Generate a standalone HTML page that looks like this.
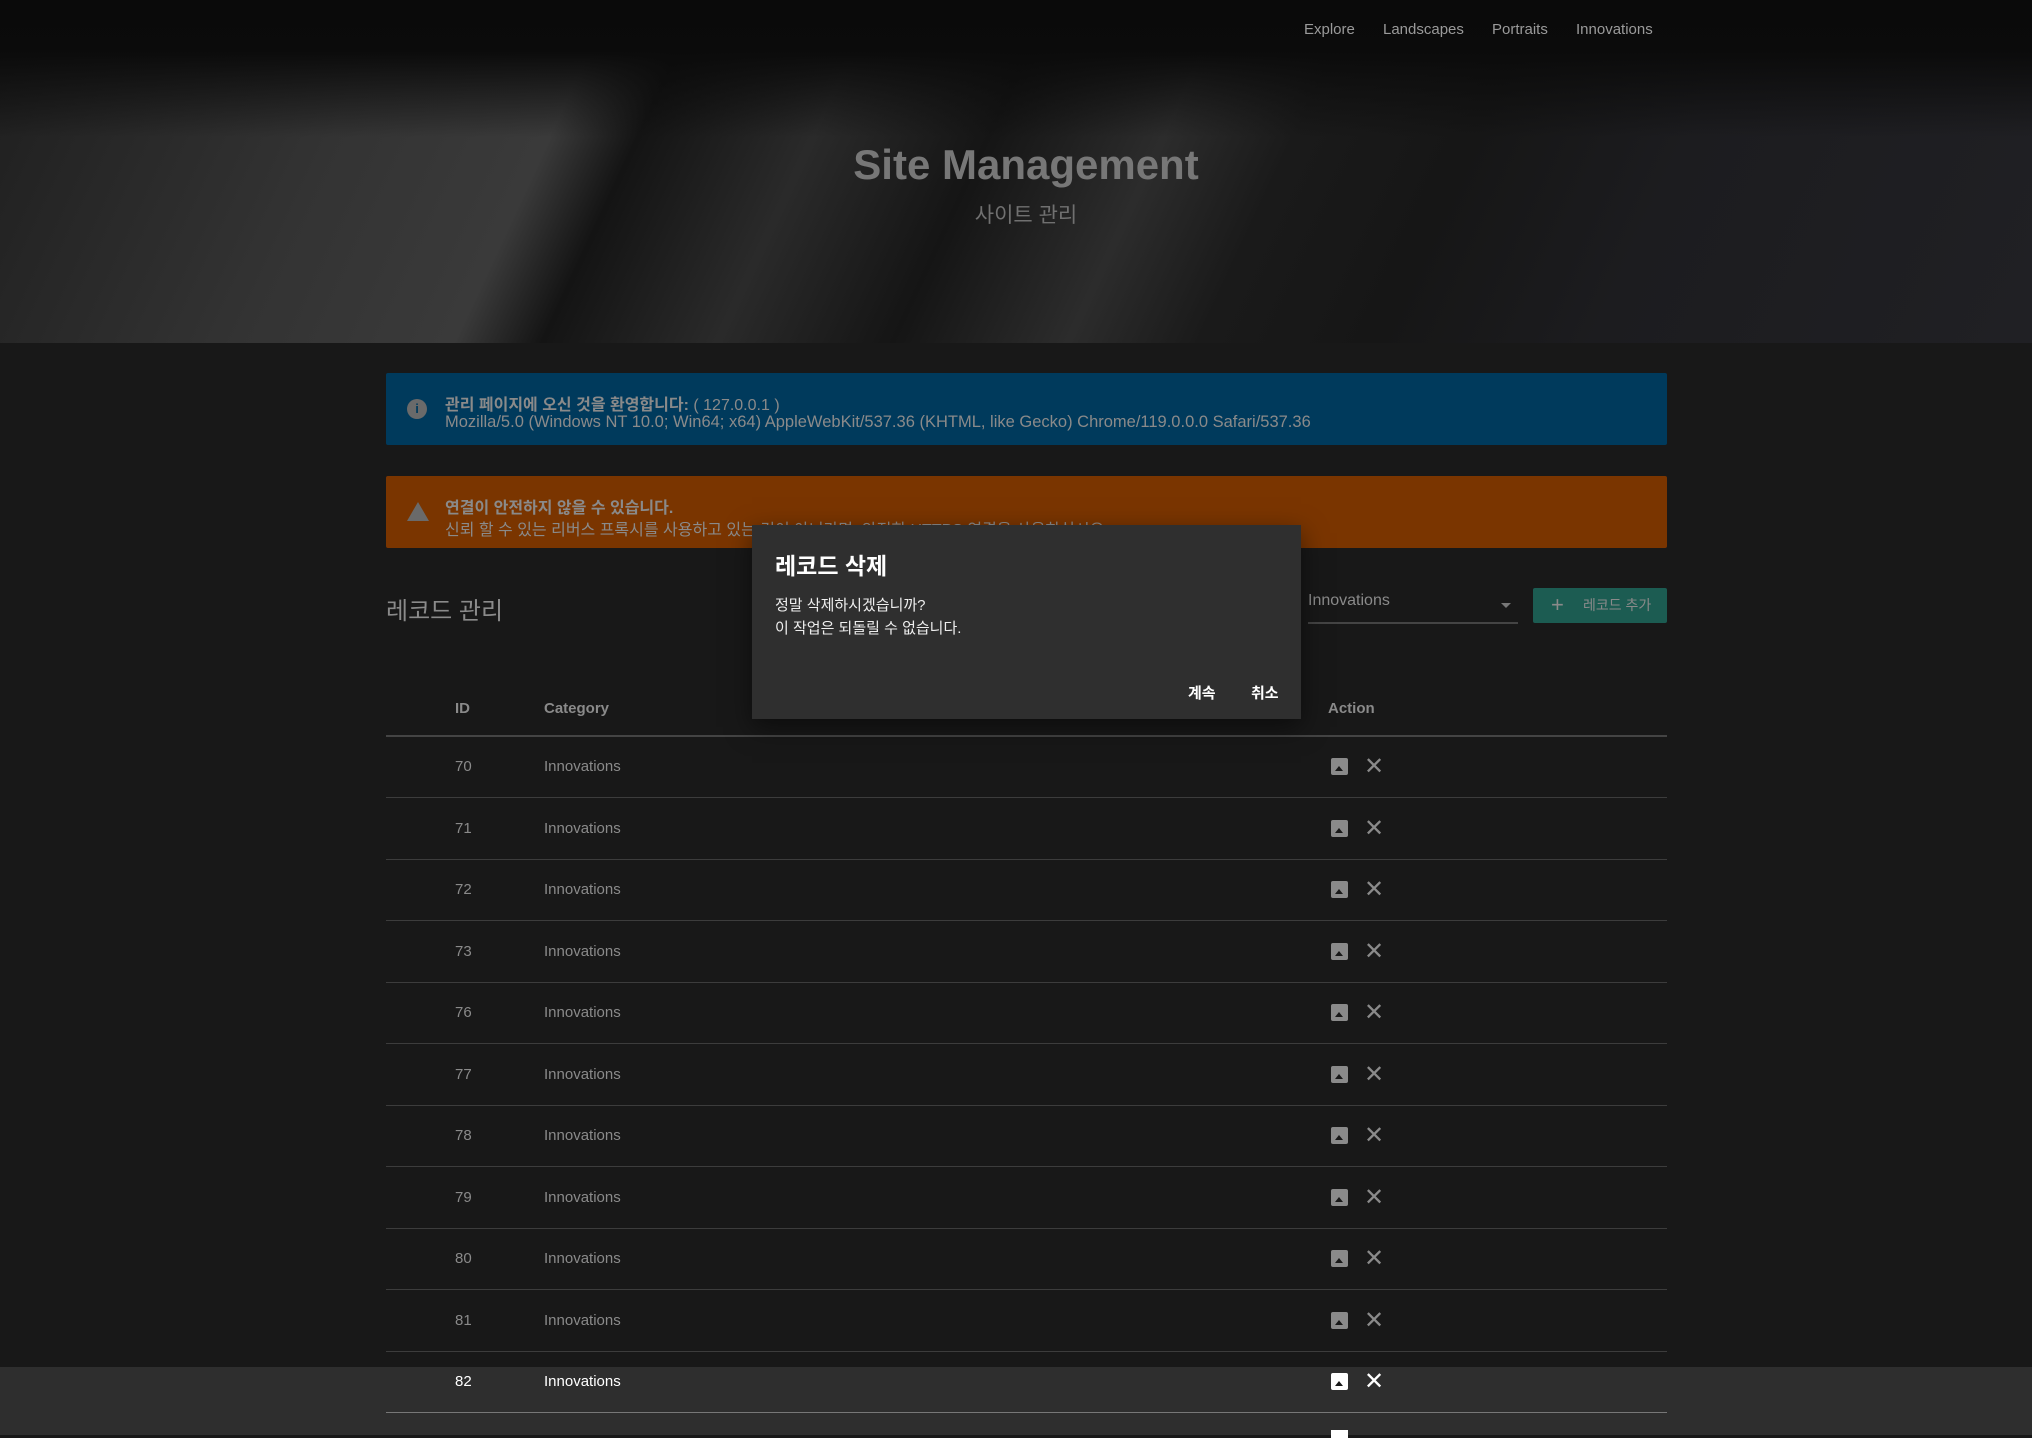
<!DOCTYPE html>
<html><head><meta charset="utf-8"><style>
*{margin:0;padding:0;box-sizing:border-box}
body{width:2032px;height:1435px;overflow:hidden;background:#181818;font-family:"Liberation Sans","Noto Sans CJK KR",sans-serif;position:relative;color:#8a8a8a}
.a{position:absolute;white-space:nowrap}
#hero{position:absolute;left:0;top:0;width:2032px;height:343px;overflow:hidden;
background:linear-gradient(180deg,#0a0a0a 0%,#0b0b0b 15%,rgba(10,10,10,0) 40%),
linear-gradient(115deg,#1e1e1e 0%,#333 18%,#3a3a3a 28%,#141414 32%,#2a2a2a 40%,#151515 48%,#2c2c2c 56%,#1a1a1a 62%,#161616 70%,#1c1c1f 80%,#202024 100%)}
.nav{top:21px;font-size:15px;color:#9a9a9a}
.row{position:absolute;left:386px;width:1281px;height:62px;border-bottom:1.5px solid #3c3c3c}
.row span{position:absolute;top:22px;font-size:15px;color:#8a8a8a}
.img{position:absolute;left:945px;top:22px;width:17px;height:17px;background:#8a8a8a;border-radius:2px}
.img:after{content:"";position:absolute;left:4px;bottom:4px;border-left:4px solid transparent;border-right:4px solid transparent;border-bottom:5px solid #181818}
.x{position:absolute;left:978px;top:16px;font-size:24px;color:#8a8a8a;font-family:"DejaVu Sans",sans-serif}
</style></head><body>
<div id="hero"></div>
<div class="a nav" style="left:1304px">Explore</div>
<div class="a nav" style="left:1383px">Landscapes</div>
<div class="a nav" style="left:1492px">Portraits</div>
<div class="a nav" style="left:1576px">Innovations</div>
<div class="a" style="left:0;width:2052px;text-align:center;top:141px;font-size:42px;font-weight:bold;color:#777">Site Management</div>
<div class="a" style="left:0;width:2052px;text-align:center;top:199px;font-size:21px;color:#707070">사이트 관리</div>

<div class="a" style="left:386px;top:373px;width:1281px;height:72px;background:#003a5c;border-radius:2px"></div>
<div class="a" style="left:407px;top:399px;width:20px;height:20px;border-radius:50%;background:#6a6a6a;color:#003a5c;font-size:13px;font-weight:bold;text-align:center;line-height:20px">i</div>
<div class="a" style="left:445px;top:391px;font-size:16px;color:#8a8a8a"><b>관리 페이지에 오신 것을 환영합니다:</b> ( 127.0.0.1 )</div>
<div class="a" style="left:445px;top:413px;font-size:16.5px;color:#8a8a8a">Mozilla/5.0 (Windows NT 10.0; Win64; x64) AppleWebKit/537.36 (KHTML, like Gecko) Chrome/119.0.0.0 Safari/537.36</div>

<div class="a" style="left:386px;top:476px;width:1281px;height:72px;background:#7a3500;border-radius:2px"></div>
<div class="a" style="left:407px;top:502px;width:0;height:0;border-left:11px solid transparent;border-right:11px solid transparent;border-bottom:19px solid #6a6a6a"></div>
<div class="a" style="left:445px;top:494px;font-size:16px;font-weight:bold;color:#8a8a8a">연결이 안전하지 않을 수 있습니다.</div>
<div class="a" style="left:445px;top:516px;font-size:16px;color:#8a8a8a">신뢰 할 수 있는 리버스 프록시를 사용하고 있는 것이 아니라면, 안전한 HTTPS 연결을 사용하십시오.</div>

<div class="a" style="left:386px;top:591px;font-size:24px;color:#8a8a8a">레코드 관리</div>
<div class="a" style="left:1308px;top:592px;font-size:16px;color:#8a8a8a">Innovations</div>
<div class="a" style="left:1501px;top:603px;border-left:5px solid transparent;border-right:5px solid transparent;border-top:5px solid #777"></div>
<div class="a" style="left:1308px;top:622px;width:210px;height:2px;background:#444"></div>
<div class="a" style="left:1533px;top:588px;width:134px;height:35px;background:#1c5c52;border-radius:2px;color:#8a8a8a;font-size:14px;line-height:35px"><span style="font-size:22px;position:absolute;left:18px;top:-1px">+</span><span style="position:absolute;left:50px">레코드 추가</span></div>

<div class="a" style="left:455px;top:700px;font-size:15px;font-weight:bold;color:#8a8a8a">ID</div>
<div class="a" style="left:544px;top:700px;font-size:15px;font-weight:bold;color:#8a8a8a">Category</div>
<div class="a" style="left:1328px;top:700px;font-size:15px;font-weight:bold;color:#8a8a8a">Action</div>
<div class="a" style="left:386px;top:735px;width:1281px;height:2px;background:#444"></div>

<div class="a" style="left:0;top:1367px;width:2032px;height:68px;background:#2e2e2e"></div>

<div class="row" style="top:736px"><span style="left:69px">70</span><span style="left:158px">Innovations</span><div class="img"></div><div class="x">✕</div></div>
<div class="row" style="top:797.5px"><span style="left:69px">71</span><span style="left:158px">Innovations</span><div class="img"></div><div class="x">✕</div></div>
<div class="row" style="top:859px"><span style="left:69px">72</span><span style="left:158px">Innovations</span><div class="img"></div><div class="x">✕</div></div>
<div class="row" style="top:920.5px"><span style="left:69px">73</span><span style="left:158px">Innovations</span><div class="img"></div><div class="x">✕</div></div>
<div class="row" style="top:982px"><span style="left:69px">76</span><span style="left:158px">Innovations</span><div class="img"></div><div class="x">✕</div></div>
<div class="row" style="top:1043.5px"><span style="left:69px">77</span><span style="left:158px">Innovations</span><div class="img"></div><div class="x">✕</div></div>
<div class="row" style="top:1105px"><span style="left:69px">78</span><span style="left:158px">Innovations</span><div class="img"></div><div class="x">✕</div></div>
<div class="row" style="top:1166.5px"><span style="left:69px">79</span><span style="left:158px">Innovations</span><div class="img"></div><div class="x">✕</div></div>
<div class="row" style="top:1228px"><span style="left:69px">80</span><span style="left:158px">Innovations</span><div class="img"></div><div class="x">✕</div></div>
<div class="row" style="top:1289.5px"><span style="left:69px">81</span><span style="left:158px">Innovations</span><div class="img"></div><div class="x">✕</div></div>
<div class="row" style="top:1351px;border-bottom-color:#777"><span style="left:69px;color:#fff">82</span><span style="left:158px;color:#fff">Innovations</span><div class="img" style="background:#fff"></div><div class="x" style="color:#fff">✕</div></div>
<div class="a" style="left:1331px;top:1430px;width:17px;height:8px;background:#fff"></div>

<div class="a" style="left:752px;top:525px;width:549px;height:194px;background:#2f2f2f;box-shadow:0 8px 24px rgba(0,0,0,.5)"></div>
<div class="a" style="left:775px;top:547px;font-size:23px;font-weight:bold;color:#fff">레코드 삭제</div>
<div class="a" style="left:775px;top:594px;font-size:15px;color:#eee">정말 삭제하시겠습니까?</div>
<div class="a" style="left:775px;top:617px;font-size:15px;color:#eee">이 작업은 되돌릴 수 없습니다.</div>
<div class="a" style="left:1188px;top:682px;font-size:15px;font-weight:bold;color:#fff">계속</div>
<div class="a" style="left:1251px;top:682px;font-size:15px;font-weight:bold;color:#fff">취소</div>
</body></html>
